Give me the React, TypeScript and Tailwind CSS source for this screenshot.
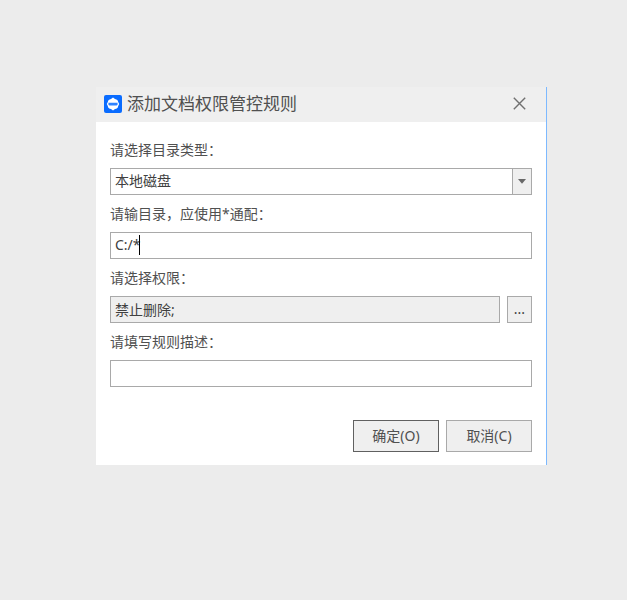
import { useState } from "react";
import type { ReactNode } from "react";

const BOX = "h-[27px] w-full border border-[#a9a9a9] px-1 pb-0.5 text-[14px] leading-5 text-[#404040] outline-none";
const BUTTON = "h-8 w-[86px] border bg-[#efefef] text-[14px] leading-5 text-[#505050]";

function AppIcon() {
  return (
    <svg viewBox="0 0 18 18" className="h-[18px] w-[18px] shrink-0" aria-hidden="true">
      <rect width="18" height="18" rx="2" fill="#0a6cff" />
      <path
        d="M9 2.6 11 3.9Q14 4.4 14.2 7L15.2 9 14.2 11Q14 13.6 11 14.1L9 15.4 7 14.1Q4 13.6 3.8 11L2.8 9 3.8 7Q4 4.4 7 3.9Z"
        fill="#fff"
      />
      <path d="M4.4 7.8h9.2v2l-1 .7H5.4l-1-.7Z" fill="#2f83ff" />
    </svg>
  );
}

function Field({ id, label, children }: { id: string; label: string; children: ReactNode }) {
  return (
    <div className="flex flex-col gap-2">
      <label htmlFor={id} className="h-5 text-[14px] leading-5 text-[#505050]">
        {label}
      </label>
      {children}
    </div>
  );
}

export default function App() {
  const [path, setPath] = useState("C:/*");
  const [description, setDescription] = useState("");

  return (
    <main className="min-h-screen bg-[#ececec] pt-[87px] pr-20 pb-20 pl-24 font-['Noto_Sans','Noto_Sans_CJK_SC',sans-serif]">
      <section
        role="dialog"
        aria-labelledby="title"
        className="border-r border-[#7db9ff] bg-white"
      >
        <header className="flex h-[35px] items-center bg-[#efefef] pr-5 pb-0.5 pl-2">
          <AppIcon />
          <h1 id="title" className="ml-[5px] flex-1 text-[17px] leading-6 text-[#505050]">
            添加文档权限管控规则
          </h1>
          <button type="button" aria-label="关闭">
            <svg viewBox="0 0 13 13" className="h-[13px] w-[13px]" aria-hidden="true">
              <path d="M.8.8 12.2 12.2M12.2.8.8 12.2" fill="none" stroke="#707070" strokeWidth="1.4" />
            </svg>
          </button>
        </header>

        <form className="flex flex-col px-3.5 pt-[18px] pb-[13px]" onSubmit={(e) => e.preventDefault()}>
          <div className="flex flex-col gap-[9px]">
            <Field id="type" label="请选择目录类型：">
              <div className="relative">
                <select id="type" className={`${BOX} block appearance-none bg-white`}>
                  <option>本地磁盘</option>
                </select>
                <span className="pointer-events-none absolute inset-y-0 right-0 flex w-5 items-center justify-center border border-[#a9a9a9] bg-[#efefef]">
                  <svg viewBox="0 0 8 5" className="h-[5px] w-2" aria-hidden="true">
                    <path d="M0 0h8L4 4.8Z" fill="#686868" />
                  </svg>
                </span>
              </div>
            </Field>

            <Field id="path" label="请输目录，应使用*通配：">
              <div className="relative">
                <input
                  id="path"
                  value={path}
                  onChange={(e) => setPath(e.target.value)}
                  className={`${BOX} block bg-white`}
                />
                {/* text caret */}
                <span className="pointer-events-none absolute top-[3px] left-[29px] h-5 w-px bg-black" />
              </div>
            </Field>

            <Field id="rights" label="请选择权限：">
              <div className="flex gap-[7px]">
                <input id="rights" readOnly value="禁止删除;" className={`${BOX} min-w-0 flex-1 bg-[#efefef]`} />
                <button
                  type="button"
                  className="h-[27px] w-[25px] border border-[#a9a9a9] bg-[#efefef] pb-0.5 text-[14px] leading-5 text-[#404040]"
                >
                  ...
                </button>
              </div>
            </Field>

            <Field id="description" label="请填写规则描述：">
              <input
                id="description"
                value={description}
                onChange={(e) => setDescription(e.target.value)}
                className={`${BOX} bg-white`}
              />
            </Field>
          </div>

          <div className="mt-[33px] flex justify-end gap-[7px]">
            <button type="submit" className={`${BUTTON} border-[#606060]`}>
              确定(O)
            </button>
            <button type="button" className={`${BUTTON} border-[#a9a9a9]`}>
              取消(C)
            </button>
          </div>
        </form>
      </section>
    </main>
  );
}
